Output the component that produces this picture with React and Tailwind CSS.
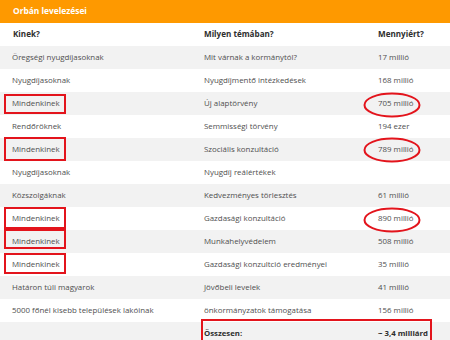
const rows = [
  { who: 'Öregségi nyugdíjasoknak', topic: 'Mit várnak a kormánytól?', cost: '17 millió' },
  { who: 'Nyugdíjasoknak', topic: 'Nyugdíjmentő intézkedések', cost: '168 millió' },
  { who: 'Mindenkinek', topic: 'Új alaptörvény', cost: '705 millió', box: 'top-[2px] h-[20px]', ring: 'top-0' },
  { who: 'Rendőröknek', topic: 'Semmisségi törvény', cost: '194 ezer' },
  { who: 'Mindenkinek', topic: 'Szociális konzultáció', cost: '789 millió', box: 'top-[-1px] h-[24px]', ring: 'top-[-1px]' },
  { who: 'Nyugdíjasoknak', topic: 'Nyugdíj reálértékek', cost: '' },
  { who: 'Közszolgáknak', topic: 'Kedvezményes törlesztés', cost: '61 millió' },
  { who: 'Mindenkinek', topic: 'Gazdasági konzultáció', cost: '890 millió', box: 'top-0 h-[22px]', ring: 'top-0' },
  { who: 'Mindenkinek', topic: 'Munkahelyvédelem', cost: '508 millió', box: 'top-[-1px] h-[20px]' },
  { who: 'Mindenkinek', topic: 'Gazdasági konzultció eredményei', cost: '35 millió', box: 'top-0 h-[21px]' },
  { who: 'Határon túli magyarok', topic: 'Jövőbeli levelek', cost: '41 millió' },
  { who: '5000 főnél kisebb települések lakóinak', topic: 'önkormányzatok támogatása', cost: '156 millió' },
];

function Ring({ pos }) {
  return (
    <svg className={`absolute left-[-15px] ${pos} pointer-events-none`} width="58" height="26" viewBox="0 0 58 26">
      <ellipse cx="29" cy="13" rx="27.5" ry="11.5" fill="none" stroke="#e3141c" strokeWidth="2" />
    </svg>
  );
}

export default function App() {
  return (
    <div className="w-[450px] h-[340px] overflow-hidden bg-white font-['Open_Sans',sans-serif] text-[7.9px] text-[#4f4f4f]">
      <div className="h-[23px] bg-[#fe9900] pl-[13px] flex items-center text-white font-bold text-[8.4px]">
        Orbán levelezései
      </div>
      <div className="grid grid-cols-[204px_174px_72px] h-[23px] items-center font-bold text-[8.1px] text-[#2e2e2e]">
        <div className="pl-[13px]">Kinek?</div>
        <div>Milyen témában?</div>
        <div>Mennyiért?</div>
      </div>
      {rows.map((r, i) => (
        <div
          key={i}
          className={`grid grid-cols-[204px_174px_72px] h-[23px] items-center ${i % 2 === 0 ? 'bg-[#f2f2f2]' : 'bg-white'}`}
        >
          <div className="relative pl-[12px] h-full flex items-center whitespace-nowrap">
            {r.box && (
              <div className={`absolute left-[4px] w-[62px] border-2 border-[#e3141c] ${r.box}`} />
            )}
            {r.who}
          </div>
          <div className="whitespace-nowrap">{r.topic}</div>
          <div className="relative h-full flex items-center whitespace-nowrap">
            {r.ring && <Ring pos={r.ring} />}
            {r.cost}
          </div>
        </div>
      ))}
      <div className="grid grid-cols-[204px_174px_72px] h-[23px] items-center bg-[#f2f2f2] font-bold text-[7.8px] text-[#2e2e2e]">
        <div />
        <div className="relative h-full flex items-center">
          <div className="absolute left-[-3px] top-[-3px] w-[231px] h-[30px] border-2 border-[#e3141c]" />
          Összesen:
        </div>
        <div>~ 3,4 milliárd</div>
      </div>
    </div>
  );
}
